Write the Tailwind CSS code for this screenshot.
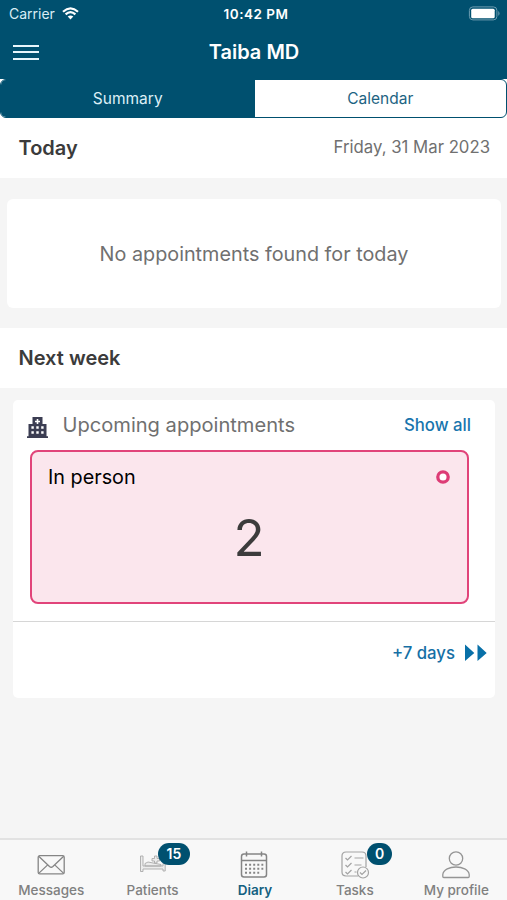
<!DOCTYPE html>
<html lang="en">
<head>
<meta charset="utf-8">
<title>Taiba MD</title>
<script src="https://cdn.jsdelivr.net/npm/@tailwindcss/browser@4"></script>
</head>
<body class="font-['Inter',sans-serif] bg-[#f5f5f5]">
<div class="w-[507px] h-[900px] flex flex-col overflow-hidden whitespace-nowrap">
  <header class="bg-[#00506f] h-[79px] shrink-0 text-white">
    <div class="h-[27px] grid grid-cols-3 items-center pl-[9px] pr-[7px]">
      <div class="flex items-center gap-[7px] text-[14px] text-[#d9edf5]"><span>Carrier</span>
        <svg width="17" height="13" viewBox="0 0 17 13" fill="none" stroke="#fff" stroke-width="2.2"><path d="M1 4.7Q8.5-2 16 4.7M3.6 7.4Q8.5 3 13.4 7.4"/><path d="M5.700 9.600Q8.500 7.300 11.300 9.600L8.500 12.400Z" fill="#fff" stroke="none"/></svg>
      </div>
      <div class="text-center text-[13.5px] font-semibold tracking-[0.5px] pt-px pl-[3px]">10:42 PM</div>
      <svg class="justify-self-end" width="32" height="15" viewBox="0 0 32 15"><rect x="1.400" y=".9" width="27.500" height="13" rx="3.500" fill="none" stroke="#6d9db1"/><rect x="3.200" y="2.800" width="23.500" height="9.400" rx="1.500" fill="#fff"/><path d="M30.300 5v4.800q1.200-.8 1.200-2.400T30.300 5" fill="#6d9db1"/></svg>
    </div>
    <div class="h-[50px] grid grid-cols-[1fr_auto_1fr] items-center px-[13px]">
      <div class="w-[26px] flex flex-col gap-[4.5px]"><i class="h-[2px] bg-[#e7f6fc]"></i><i class="h-[2px] bg-[#e7f6fc]"></i><i class="h-[2px] bg-[#e7f6fc]"></i></div>
      <h1 class="text-[20px] font-semibold leading-[30px] pl-px">Taiba MD</h1>
    </div>
  </header>
  <nav class="bg-white h-[39px] shrink-0">
    <div class="h-full border border-[#00506f] rounded-[6px] overflow-hidden flex text-[15.500px] leading-[37px] text-center">
      <div class="w-[253.5px] bg-[#00506f] text-[#dceff6]">Summary</div>
      <div class="flex-1 text-[#1d6382]">Calendar</div>
    </div>
  </nav>
  <section class="bg-white h-[60px] shrink-0 flex justify-between pl-[18.5px] pr-[17px] pt-[15px]">
    <h2 class="text-[20px] leading-[30px] font-semibold text-[#3b3b3b]">Today</h2>
    <span class="text-[16.75px] leading-[29px] text-[#707070]">Friday, 31 Mar 2023</span>
  </section>
  <div class="h-[150px] shrink-0 pt-[20.5px] pl-[7px] pr-[6px]">
    <div class="h-[109px] bg-white rounded-[6px] flex items-center justify-center text-[19.8px] text-[#707070] pt-[3px]">No appointments found for today</div>
  </div>
  <section class="bg-white h-[60px] shrink-0 px-[18.5px] pt-[15px]">
    <h2 class="text-[20px] leading-[30px] font-semibold text-[#3b3b3b]">Next week</h2>
  </section>
  <main class="flex-1 pt-[12px] pl-[13px] pr-[12px]">
    <div class="bg-white rounded-[5px] h-[298px] flex flex-col">
      <div class="h-[50px] shrink-0 flex items-center pl-[14px] pr-[24px]">
        <svg class="mt-[4px]" width="21" height="21" viewBox="0 0 21 21"><path fill="#3b3d52" fill-rule="evenodd" d="M0 19.3h1.500V7h4V0h10v7h4v12.300H21V21H0zM9.700 2v1.700H8v1.600h1.700V7h1.600V5.300H13V3.700h-1.700V2zM4.400 9.200v2.500h2.400V9.200zm4.900 0v2.500h2.400V9.200zm4.900 0v2.500h2.400V9.200zM4.400 14.200v2.500h2.400v-2.500zm4.900 0v2.500h2.400v-2.500zm4.900 0v2.500h2.400v-2.500z"/></svg>
        <span class="ml-[14.5px] text-[20.1px] text-[#707070]">Upcoming appointments</span>
        <span class="ml-auto pt-[2px] text-[16.75px] font-medium text-[#1875ad]">Show all</span>
      </div>
      <div class="h-[154px] shrink-0 ml-[17px] mr-[26px] border-2 border-[#e1447a] rounded-[8px] bg-[#fbe6ed] pl-[16px] pr-[17px] flex flex-col">
        <div class="flex items-center justify-between h-[50px] text-[19.8px] text-black"><span class="pt-px">In person</span><svg width="14" height="14" viewBox="0 0 14 14"><circle cx="7" cy="7" r="5.200" fill="#fff" stroke="#dd3c76" stroke-width="3.300"/></svg></div>
        <div class="text-center text-[51px] leading-[71px] text-[#3c3c3c]">2</div>
      </div>
      <div class="h-[18px] border-b border-[#d6d6d6]"></div>
      <div class="h-[62px] flex items-center justify-end gap-[10px] pr-[8px] text-[16.75px] font-medium text-[#1670a5]"><span class="pt-px">+7 days</span>
        <svg width="22" height="18" viewBox="0 0 22 18" fill="#0870a8"><path d="M0 .5 9.300 9 0 17zM12.500.5 21.700 9 12.500 17z"/></svg>
      </div>
    </div>
  </main>
  <footer class="h-[62px] shrink-0 bg-[#f8f8f8] border-t-2 border-[#e2e2e2] grid grid-cols-5 text-[13.5px] leading-[21px] font-medium text-[#808080]">
    <div class="flex flex-col items-center pt-[10px] pl-px"><svg width="32" height="30" viewBox="0 0 32 30" fill="none" stroke="#858585" stroke-width="1.3"><rect x="3.2" y="5.7" width="26" height="18.2" rx="1.5"/><path d="m3.7 6.2 10.8 10.3q1.7 1.5 3.4 0L28.7 6.2M3.7 23.4l9-8.5M28.7 23.4l-9-8.5"/></svg><span>Messages</span></div>
    <div class="relative flex flex-col items-center pt-[10px] pl-px"><svg width="32" height="30" viewBox="0 0 32 30" fill="#ececec" stroke="#aaa" stroke-width=".9"><path d="M3.500 6H6v10h20v-2.500h2.200V21H26v-2H6v2.500H3.500zM8 13.500l3-1.500 13 2.500V16H8z"/><path d="M17.500 6h2.500v2.500h2.500V11H20v2h-2.500v-2H15V8.500h2.500z"/></svg><span>Patients</span>
      <b class="absolute left-[56.5px] top-[3px] w-[32px] h-[22px] rounded-full bg-[#00506f] text-white text-[14px] leading-[22px] text-center font-semibold">15</b></div>
    <div class="flex flex-col items-center pt-[10px] pl-[3px]"><svg width="32" height="30" viewBox="0 0 32 30" fill="none" stroke="#858585" stroke-width="1.500"><rect x="2.500" y="4" width="25" height="23" rx="2.500"/><path d="M2.500 10.500h25M7.500 1.500v5M22.500 1.500v5"/><path stroke-width="2" stroke-dasharray="2 2.100" d="M6 14.700h18.300M6 18.700h18.300M6 22.700h14.200"/></svg><span class="font-semibold text-[#146080]">Diary</span></div>
    <div class="relative flex flex-col items-center pt-[10px]"><svg width="32" height="30" viewBox="0 0 32 30" fill="none" stroke="#a3a3a3" stroke-width="1.200"><path d="M19 26H7q-4 0-4-4V6q0-4 4-4h16q4 0 4 4v11"/><path d="m6.500 8 2 2L12.500 6M6.500 15l2 2L12.500 13M6.500 22l2 2L12.500 20M15.500 8h9M15.500 15h7M15.500 22h2"/><circle cx="24" cy="22.500" r="5.500" fill="#f8f8f8"/><path d="m21 22.500 2 2 4-4"/></svg><span>Tasks</span>
      <b class="absolute left-[63px] top-[3px] w-[25px] h-[22px] rounded-full bg-[#00506f] text-white text-[14px] leading-[22px] text-center font-semibold">0</b></div>
    <div class="flex flex-col items-center pt-[10px]"><svg width="32" height="30" viewBox="0 0 32 30" fill="none" stroke="#959595" stroke-width="1.300"><circle cx="16" cy="8.500" r="6.700"/><path d="M2.800 26.500v-2C4 14.500 28 14.500 29.200 24.500v2q0 1-1 1H3.800q-1 0-1-1z"/></svg><span>My profile</span></div>
  </footer>
</div>
</body>
</html>
